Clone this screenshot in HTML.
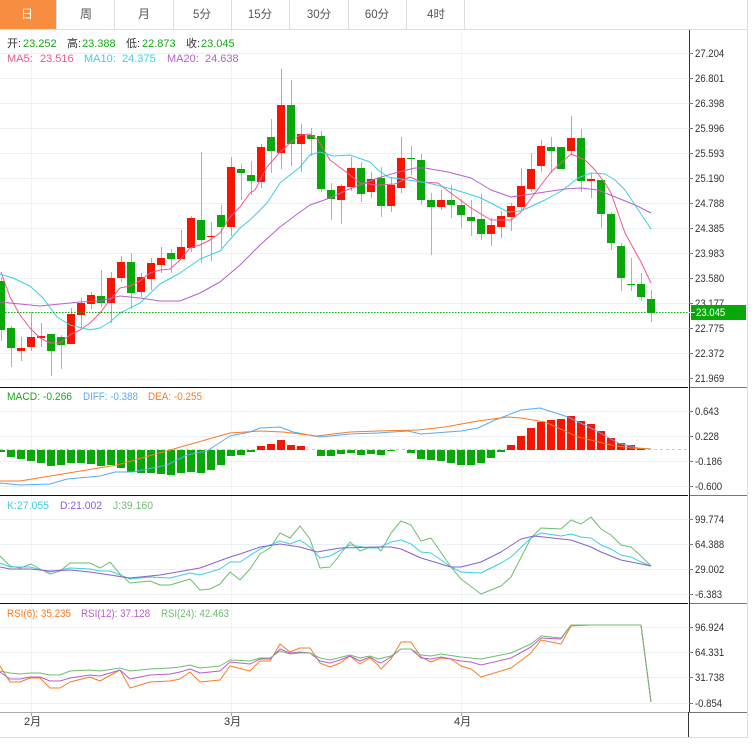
<!DOCTYPE html>
<html><head><meta charset="utf-8"><style>
html,body{margin:0;padding:0;background:#fff;width:755px;height:746px;overflow:hidden}
svg{display:block}
text{font-family:"Liberation Sans","Noto Sans CJK SC",sans-serif}
.a text{font-size:11px;fill:#333}
.l text{font-size:11px}
.t text{font-size:12px;fill:#555;text-anchor:middle}
.t text.d{font-size:11.5px}
polyline{fill:none;stroke-width:1;stroke-linejoin:round}
</style></head><body>
<svg width="755" height="746" viewBox="0 0 755 746" xmlns="http://www.w3.org/2000/svg">
<rect x="0" y="0" width="56" height="29" fill="#f68d40"/>
<path d="M56.5 0V29M114.5 0V29M173.5 0V29M231.5 0V29M289.5 0V29M348.5 0V29M406.5 0V29M464.5 0V29" stroke="#ddd" fill="none"/>
<path d="M0 29.5H747.5M747.5 0V737.5H0" stroke="#ddd" fill="none"/>
<g class="t">
<text x="27" y="18" style="fill:#fff">日</text>
<text x="86" y="18">周</text><text x="144" y="18">月</text><text class="d" x="202" y="18">5分</text><text class="d" x="260" y="18">15分</text><text class="d" x="319" y="18">30分</text><text class="d" x="377" y="18">60分</text><text class="d" x="436" y="18">4时</text>
</g>
<path d="M31.5 30V712M231.5 30V712M461.5 30V712" stroke="#eef3f6" fill="none"/>
<path d="M0 53.5H689M0 78.5H689M0 103.5H689M0 128.5H689M0 153.5H689M0 178.5H689M0 203.5H689M0 228.5H689M0 253.5H689M0 278.5H689M0 303.5H689M0 328.5H689M0 353.5H689M0 379.5H689M0 411.5H689M0 436.5H689M0 461.5H689M0 486.5H689M0 519.5H689M0 544.5H689M0 569.5H689M0 594.5H689M0 627.5H689M0 652.5H689M0 677.5H689M0 703.5H689" stroke="#eaf0f4" fill="none"/>
<path d="M21.5 337V361M31.5 312V351M41.5 323V347M71.5 308V344M81.5 298V329M91.5 292V309M111.5 272V323M121.5 256V282M141.5 273V297M151.5 258V290M161.5 247V273M181.5 230V259M191.5 216V252M211.5 222V261M231.5 157V236M261.5 144V188M281.5 69V169M301.5 124V172M341.5 184V224M351.5 157V191M371.5 172V198M391.5 177V212M401.5 137V193M441.5 190V210M491.5 218V246M501.5 211V238M511.5 203V231M521.5 168V211M531.5 153V192M541.5 140V172M571.5 116V154M591.5 173V198" stroke="#f58d88" fill="none"/>
<path d="M1.5 277V341M11.5 326V367M51.5 334V376M61.5 335V369M101.5 270V307M131.5 253V309M171.5 249V273M201.5 152V263M221.5 205V248M241.5 164V200M251.5 161V195M271.5 119V173M291.5 80V166M311.5 128V156M321.5 131V192M331.5 183V220M361.5 162V202M381.5 167V217M411.5 146V175M421.5 154V205M431.5 193V255M451.5 185V218M461.5 199V228M471.5 200V236M481.5 194V240M551.5 137V173M561.5 147V169M581.5 129V192M601.5 180V228M611.5 212V250M621.5 243V291M631.5 258V291M641.5 273V301M651.5 290V322" stroke="#86cf86" fill="none"/>
<path fill="#f61503" d="M17 348h8v3h-8zM27 337h8v10h-8zM37 336h8v2h-8zM67 314h8v30h-8zM77 303h8v12h-8zM87 295h8v9h-8zM107 278h8v25h-8zM117 262h8v16h-8zM137 277h8v15h-8zM147 263h8v16h-8zM157 258h8v7h-8zM177 247h8v12h-8zM187 218h8v30h-8zM207 236h8v1h-8zM227 167h8v60h-8zM257 147h8v35h-8zM277 105h8v48h-8zM297 134h8v10h-8zM337 186h8v14h-8zM347 168h8v19h-8zM367 179h8v13h-8zM387 185h8v21h-8zM397 158h8v30h-8zM437 200h8v7h-8zM487 225h8v9h-8zM497 216h8v11h-8zM507 206h8v11h-8zM517 186h8v21h-8zM527 169h8v20h-8zM537 146h8v20h-8zM567 138h8v13h-8zM587 179h8v2h-8z"/>
<path fill="#09a809" d="M-3 281h8v49h-8zM7 328h8v20h-8zM47 334h8v17h-8zM57 337h8v8h-8zM97 296h8v7h-8zM127 262h8v31h-8zM167 253h8v6h-8zM197 220h8v20h-8zM217 215h8v12h-8zM237 169h8v4h-8zM247 175h8v6h-8zM267 137h8v14h-8zM287 105h8v39h-8zM307 135h8v4h-8zM317 136h8v53h-8zM327 190h8v9h-8zM357 168h8v26h-8zM377 178h8v28h-8zM407 158h8v1h-8zM417 160h8v40h-8zM427 200h8v7h-8zM447 200h8v5h-8zM457 205h8v10h-8zM467 217h8v4h-8zM477 219h8v15h-8zM547 147h8v4h-8zM557 147h8v22h-8zM577 138h8v43h-8zM597 180h8v34h-8zM607 214h8v29h-8zM617 246h8v32h-8zM627 284h8v1h-8zM637 284h8v13h-8zM647 299h8v14h-8z"/>
<polyline stroke="#f0568c" points="1,272 10,297 20,315 30,328 40,338 50,343 60,343 70,335 80,330 90,323 100,313 110,300 120,288 130,286 140,281 150,273 160,270 170,269 180,260 190,248 200,245 210,240 220,233 230,217 240,207 250,193 255,190 267,167 280,152 290,143 300,135 310,134 318,140 330,160 350,175 360,183 378,185 395,184 410,177 421,182 438,183 448,191 471,208 491,220 511,220 521,212 535,193 551,172 571,154 585,160 595,170 605,183 611,193 625,233 641,262 651,283"/>
<polyline stroke="#3ccfe2" points="0,274 13,278 30,286 43,298 57,317 70,325 90,330 100,328 110,322 120,313 140,303 160,284 180,273 200,259 220,251 240,228 250,220 267,203 280,183 300,167 310,155 320,152 333,156 350,155 370,162 378,170 388,177 408,180 428,183 448,188 456,190 481,198 508,212 521,211 545,200 563,190 578,178 591,173 605,174 615,180 625,190 635,205 651,229"/>
<polyline stroke="#b860cc" points="0,302 20,304 40,306 60,304 80,302 100,301 120,296 140,298 160,301 180,301 200,293 220,282 240,265 260,245 280,227 300,212 310,205 330,198 347,190 360,185 378,178 395,173 415,168 425,168 448,172 471,178 491,190 511,197 545,192 565,189 581,188 598,190 635,205 651,213"/>
<path d="M5 312.5H691" stroke="#09a809" stroke-dasharray="1.5 1.5" fill="none"/>
<path d="M0 449.5H687" stroke="#9fdcea" stroke-dasharray="3 3" fill="none"/>
<path fill="#09a809" d="M-3 450h8v2h-8zM7 450h8v7h-8zM17 450h8v9h-8zM27 450h8v11h-8zM37 450h8v13h-8zM47 450h8v16h-8zM57 450h8v15h-8zM67 450h8v13h-8zM77 450h8v13h-8zM87 450h8v14h-8zM97 450h8v16h-8zM107 450h8v15h-8zM117 450h8v18h-8zM127 450h8v22h-8zM137 450h8v23h-8zM147 450h8v23h-8zM157 450h8v24h-8zM167 450h8v25h-8zM177 450h8v23h-8zM187 450h8v22h-8zM197 450h8v23h-8zM207 450h8v20h-8zM217 450h8v15h-8zM227 450h8v6h-8zM237 450h8v5h-8zM247 450h8v2h-8zM317 450h8v6h-8zM327 450h8v6h-8zM337 450h8v4h-8zM347 450h8v3h-8zM357 450h8v5h-8zM367 450h8v4h-8zM377 450h8v5h-8zM387 450h8v1h-8zM407 450h8v3h-8zM417 450h8v9h-8zM427 450h8v10h-8zM437 450h8v11h-8zM447 450h8v13h-8zM457 450h8v15h-8zM467 450h8v15h-8zM477 450h8v13h-8zM487 450h8v8h-8zM497 450h8v2h-8z"/>
<path fill="#f61503" d="M257 446h8v4h-8zM267 444h8v6h-8zM277 440h8v10h-8zM287 445h8v5h-8zM297 446h8v4h-8zM507 445h8v5h-8zM517 436h8v14h-8zM527 428h8v22h-8zM537 422h8v28h-8zM547 420h8v30h-8zM557 419h8v31h-8zM567 416h8v34h-8zM577 421h8v29h-8zM587 424h8v26h-8zM597 431h8v19h-8zM607 438h8v12h-8zM617 443h8v7h-8zM627 445h8v5h-8zM637 448h8v2h-8z"/>
<polyline stroke="#5aaaf0" points="0,483 20,485 50,484 67,479 100,476 115,472 133,472 167,465 187,455 207,451 230,436 250,432 260,428 280,427 293,432 320,437 350,434 378,433 408,431 421,434 461,431 478,428 495,420 521,410 540,408 568,417 595,430 618,443 638,448 651,449"/>
<polyline stroke="#f97b22" points="0,481 20,481 117,465 170,450 230,433 260,431 283,432 317,436 350,432 378,431 418,430 445,427 478,421 508,417 521,418 545,422 578,437 611,445 631,448 651,449"/>
<polyline stroke="#6fbd6f" points="0,556 10,566 20,568 31,564 40,569 50,574 60,571 70,563 90,563 100,568 110,562 120,574 130,583 150,581 160,585 170,585 190,579 200,590 210,589 220,584 230,572 240,580 250,569 260,554 270,548 280,533 290,538 300,526 310,539 320,568 330,567 350,542 360,551 370,547 378,548 381,551 391,533 401,521 411,525 421,541 431,538 451,567 461,579 481,594 501,586 511,577 531,538 541,528 561,529 571,520 581,524 591,517 601,529 611,535 621,545 631,547 641,556 651,566"/>
<polyline stroke="#3ccfe2" points="0,563 10,567 30,567 50,572 70,568 90,569 100,571 110,571 130,579 150,577 170,578 190,573 200,575 220,569 230,562 240,562 260,549 280,541 290,544 300,540 310,547 320,558 330,556 350,545 370,548 378,548 391,542 401,540 411,544 421,552 431,553 451,567 461,572 481,573 501,563 511,557 531,538 541,533 561,536 571,534 581,537 591,538 601,545 611,549 621,555 631,557 641,562 651,566"/>
<polyline stroke="#8a60cc" points="0,567 10,569 30,569 50,571 70,570 90,572 110,575 130,578 160,575 200,568 230,557 240,554 260,547 280,544 300,547 317,552 340,548 378,547 391,547 401,549 421,558 431,561 451,567 461,567 481,562 501,552 521,539 534,536 571,540 591,547 601,552 621,560 641,564 651,566"/>
<polyline stroke="#f97b22" points="0,666 10,682 20,682 30,678 40,678 50,688 60,688 70,682 90,677 100,681 120,670 130,688 150,682 170,681 180,679 190,672 200,682 220,680 230,666 250,671 260,661 270,661 280,644 290,652 300,648 310,648 320,663 330,667 340,663 350,656 360,664 370,658 378,665 381,669 391,659 401,642 411,642 421,657 431,662 441,658 451,659 461,666 471,669 481,677 511,668 531,653 541,640 561,644 571,626 591,625 641,625 651,702"/>
<polyline stroke="#b860cc" points="0,672 10,679 20,679 30,677 40,677 50,681 60,681 70,678 90,675 100,676 120,670 130,679 150,675 170,674 180,672 190,669 200,673 220,671 230,662 250,664 260,659 270,659 280,649 290,653 300,652 310,653 320,661 330,663 340,660 350,656 360,661 370,657 378,662 381,663 391,657 401,649 411,649 421,658 431,659 441,657 461,661 471,662 481,665 511,658 531,647 541,638 561,639 571,625 641,625 651,702"/>
<polyline stroke="#6fbd6f" points="0,671 10,673 20,674 30,673 40,673 50,675 60,675 70,671 90,670 100,671 120,668 130,671 150,669 170,668 180,667 190,665 200,668 220,666 230,660 250,661 260,658 270,658 280,651 290,654 300,653 310,653 320,658 330,660 350,655 360,658 370,656 378,659 391,656 401,649 411,649 421,655 431,656 441,654 461,657 481,659 511,653 531,644 541,636 561,638 571,625 591,625 641,625 651,702"/>
<path d="M0 387.5H688M0 495.5H688M0 603.5H688" stroke="#111" fill="none"/>
<path d="M690 387.5H747M690 495.5H747M690 603.5H747M689 712.5H747" stroke="#777" fill="none"/>
<path d="M0 712.5H689" stroke="#aaa" fill="none"/>
<path d="M689.5 30V712M688.5 712V737" stroke="#333" fill="none"/>
<path d="M31.5 712V716M231.5 712V716M461.5 712V716" stroke="#aaa" fill="none"/>
<path d="M689 53.5h4M689 78.5h4M689 103.5h4M689 128.5h4M689 153.5h4M689 178.5h4M689 203.5h4M689 228.5h4M689 253.5h4M689 278.5h4M689 303.5h4M689 328.5h4M689 353.5h4M689 378.5h4M689 411.5h4M689 436.5h4M689 461.5h4M689 486.5h4M689 519.5h4M689 544.5h4M689 569.5h4M689 594.5h4M689 627.5h4M689 652.5h4M689 677.5h4M689 703.5h4" stroke="#777" fill="none"/>
<g class="a" transform="translate(695 0) scale(.87 1)">
<text x="0" y="57">27.204</text><text x="0" y="82">26.801</text><text x="0" y="107">26.398</text><text x="0" y="132">25.996</text><text x="0" y="157">25.593</text><text x="0" y="182">25.190</text><text x="0" y="207">24.788</text><text x="0" y="232">24.385</text><text x="0" y="257">23.983</text><text x="0" y="282">23.580</text><text x="0" y="307">23.177</text><text x="0" y="332">22.775</text><text x="0" y="357">22.372</text><text x="0" y="382">21.969</text>
<text x="0" y="415">0.643</text><text x="0" y="440">0.228</text><text x="0" y="465">-0.186</text><text x="0" y="490">-0.600</text>
<text x="0" y="523">99.774</text><text x="0" y="548">64.388</text><text x="0" y="573">29.002</text><text x="0" y="598">-6.383</text>
<text x="0" y="631">96.924</text><text x="0" y="656">64.331</text><text x="0" y="681">31.738</text><text x="0" y="707">-0.854</text>
</g>
<rect x="691" y="305" width="55" height="15" fill="#09a809"/>
<path d="M689 312.5h6" stroke="#cfc" fill="none"/>
<text transform="translate(696 316) scale(.87 1)" x="0" y="0" style="font-size:11px;fill:#fff">23.045</text>
<g class="l">
<text x="7" y="47" fill="#333">开:</text><text x="23" y="47" fill="#16a916">23.252</text>
<text x="67" y="47" fill="#333">高:</text><text x="82" y="47" fill="#16a916">23.388</text>
<text x="126" y="47" fill="#333">低:</text><text x="142" y="47" fill="#16a916">22.873</text>
<text x="186" y="47" fill="#333">收:</text><text x="201" y="47" fill="#16a916">23.045</text>
<text x="7" y="62" fill="#f0568c">MA5: </text><text x="40" y="62" fill="#f0568c">23.516</text>
<text x="84" y="62" fill="#3ccfe2">MA10: </text><text x="122" y="62" fill="#3ccfe2">24.375</text>
<text x="167" y="62" fill="#b860cc">MA20: </text><text x="205" y="62" fill="#b860cc">24.638</text>
<text x="7" y="400" fill="#16a916" textLength="65" lengthAdjust="spacingAndGlyphs">MACD: -0.266</text>
<text x="83" y="400" fill="#5aaaf0" textLength="55" lengthAdjust="spacingAndGlyphs">DIFF: -0.388</text>
<text x="148" y="400" fill="#f97b22" textLength="54" lengthAdjust="spacingAndGlyphs">DEA: -0.255</text>
<text x="7" y="509" fill="#3ccfe2" textLength="42" lengthAdjust="spacingAndGlyphs">K:27.055</text>
<text x="60" y="509" fill="#8a60cc" textLength="42" lengthAdjust="spacingAndGlyphs">D:21.002</text>
<text x="113" y="509" fill="#6fbd6f" textLength="40" lengthAdjust="spacingAndGlyphs">J:39.160</text>
<text x="7" y="617" fill="#f97b22" textLength="64" lengthAdjust="spacingAndGlyphs">RSI(6): 35.235</text>
<text x="81" y="617" fill="#b860cc" textLength="69" lengthAdjust="spacingAndGlyphs">RSI(12): 37.128</text>
<text x="161" y="617" fill="#6fbd6f" textLength="68" lengthAdjust="spacingAndGlyphs">RSI(24): 42.463</text>
<text x="24" y="725" fill="#333">2月</text>
<text x="224" y="725" fill="#333">3月</text>
<text x="454" y="725" fill="#333">4月</text>
</g>
</svg>
</body></html>
